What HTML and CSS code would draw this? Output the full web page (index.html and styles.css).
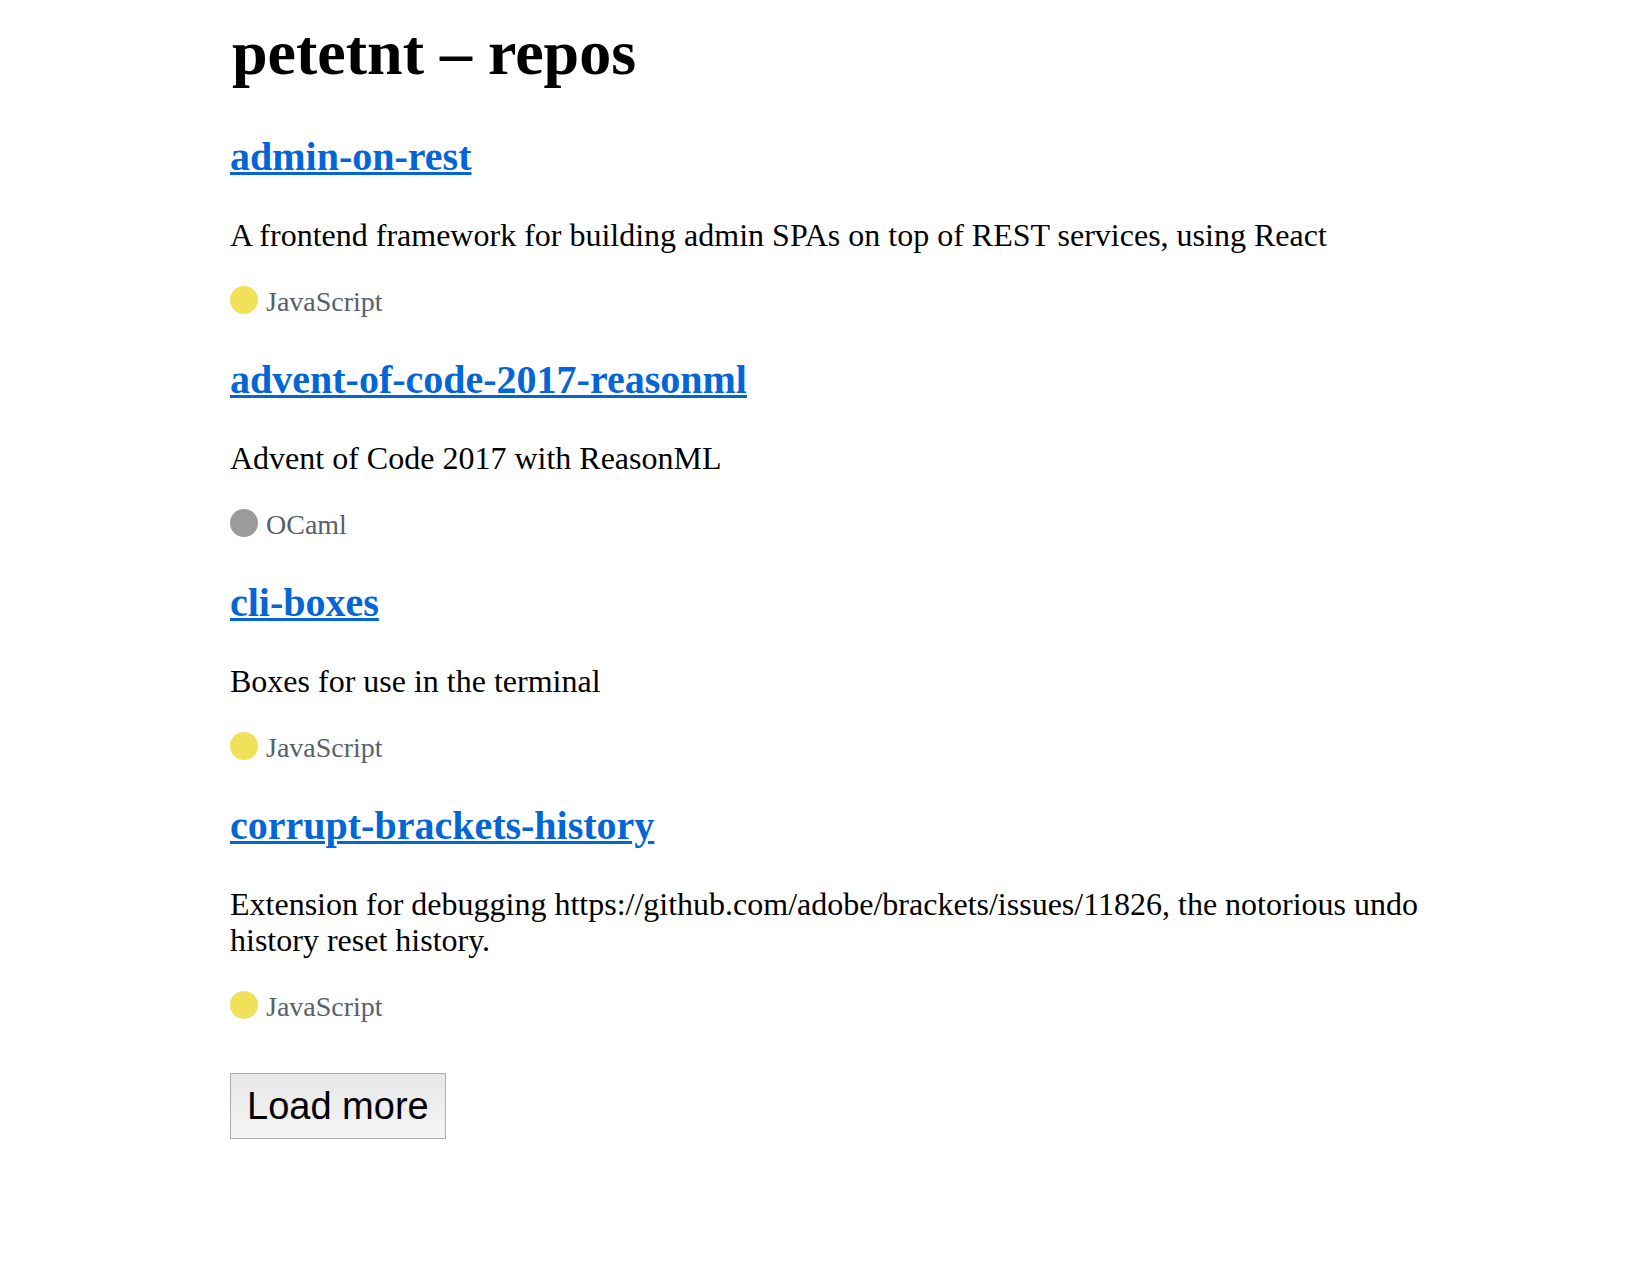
FILE: index.html
```html
<!DOCTYPE html>
<html>
<head>
<meta charset="utf-8">
<title>petetnt – repos</title>
<link rel="stylesheet" href="styles.css">
</head>
<body>
<main class="page">
  <h1 class="title">petetnt – repos</h1>
  <ul class="repos">
    <li class="repo">
      <h2 class="repo-name"><a href="#">admin-on-rest</a></h2>
      <p class="repo-desc">A frontend framework for building admin SPAs on top of REST services, using React</p>
      <div class="repo-lang"><span class="dot dot-js"></span><span class="lang-name">JavaScript</span></div>
    </li>
    <li class="repo">
      <h2 class="repo-name"><a href="#">advent-of-code-2017-reasonml</a></h2>
      <p class="repo-desc">Advent of Code 2017 with ReasonML</p>
      <div class="repo-lang"><span class="dot dot-ocaml"></span><span class="lang-name">OCaml</span></div>
    </li>
    <li class="repo">
      <h2 class="repo-name"><a href="#">cli-boxes</a></h2>
      <p class="repo-desc">Boxes for use in the terminal</p>
      <div class="repo-lang"><span class="dot dot-js"></span><span class="lang-name">JavaScript</span></div>
    </li>
    <li class="repo">
      <h2 class="repo-name"><a href="#">corrupt-brackets-history</a></h2>
      <p class="repo-desc">Extension for debugging https://github.com/adobe/brackets/issues/11826, the notorious undo history reset history.</p>
      <div class="repo-lang"><span class="dot dot-js"></span><span class="lang-name">JavaScript</span></div>
    </li>
  </ul>
  <button class="load-more" type="button">Load more</button>
</main>
</body>
</html>
```
FILE: styles.css
```css
html, body {
  margin: 0;
  padding: 0;
  background: #ffffff;
}

body {
  font-family: "Liberation Serif", "Times New Roman", serif;
  color: #000000;
}

.page {
  padding: 17px 0 40px 230px;
  width: 1210px;
}

.title {
  margin: 0 0 45px 2px;
  font-size: 64px;
  line-height: 72px;
  font-weight: bold;
}

.repos {
  list-style: none;
  margin: 0;
  padding: 0;
}

.repo {
  margin: 0 0 41px 0;
}

.repo-name {
  margin: 0 0 37px 0;
  font-size: 40px;
  line-height: 46px;
  font-weight: bold;
}

.repo-name a {
  color: #0366d6;
  text-decoration: underline;
  text-decoration-thickness: 3px;
  text-underline-offset: 2px;
}

.repo-desc {
  margin: 0 0 35px 0;
  font-size: 32px;
  line-height: 36px;
}

.repo-lang {
  display: flex;
  align-items: flex-start;
  gap: 8px;
  font-size: 28px;
  line-height: 28px;
  color: #586069;
}

.dot {
  width: 28px;
  height: 28px;
  border-radius: 50%;
  margin-top: -2px;
  flex: none;
}

.dot-js {
  background: #f1e05a;
}

.dot-ocaml {
  background: #9b9b9b;
}

.load-more {
  margin: 11px 0 0 0;
  height: 66px;
  padding: 0 16px;
  border: 1px solid #adadad;
  border-radius: 0;
  background: linear-gradient(#e7e7e7, #f5f5f5);
  font-family: "Liberation Sans", Arial, sans-serif;
  font-size: 38px;
  color: #000000;
}
```
